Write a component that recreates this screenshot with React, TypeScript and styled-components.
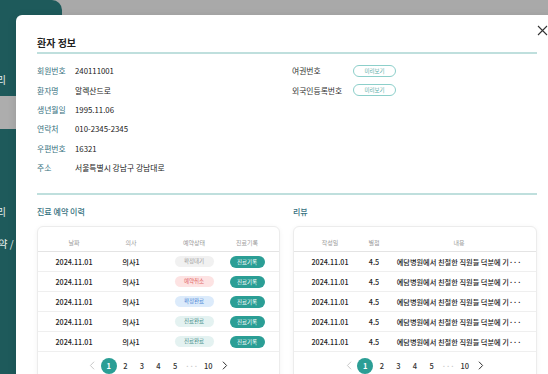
import React from 'react';
import styled, { createGlobalStyle } from 'styled-components';

type Status = 'wait' | 'cancel' | 'confirm' | 'done';

interface IReservation {
  date: string,
  doctor: string,
  status: Status,
}

interface IReview {
  date: string,
  rating: string,
  content: string,
}

const TEAL = '#2b9e95';

const GlobalStyle = createGlobalStyle`
  html, body {
    margin: 0;
    padding: 0;
  }
  body {
    width: 548px;
    height: 374px;
    overflow: hidden;
    background: #a9a9a9;
    font-family: "Noto Sans CJK KR", "Noto Sans", sans-serif;
  }
  * {
    box-sizing: border-box;
  }
`

const Page = styled.div`
  position: relative;
  display: flex;
  width: 548px;
  height: 374px;
  overflow: hidden;
  background: #a9a9a9;
`
const Sidebar = styled.nav`
  width: 62px;
  flex-shrink: 0;
  display: flex;
  flex-direction: column;
  padding-top: 63.6px;
  background: #1e5a5b;
  border-top-right-radius: 10px;
`
const MenuItem = styled.div<{ $active?: boolean; $shift?: number }>`
  height: 32.8px;
  display: flex;
  align-items: center;
  overflow: hidden;
  white-space: nowrap;
  font-size: 10px;
  color: #e6eeee;
  background: ${p => (p.$active ? '#adadad' : 'transparent')};
  span {
    margin-left: ${p => p.$shift || 0}px;
  }
`
const Content = styled.div`
  flex: 1;
  background: #a9a9a9;
`

const Modal = styled.div`
  position: absolute;
  left: 16px;
  top: 15px;
  width: 542px;
  height: 420px;
  padding: 21px 21px 0;
  background: #fff;
  border-radius: 6px;
  box-shadow: 0 2px 10px rgba(0, 0, 0, 0.12);
`
const Close = styled.button`
  position: absolute;
  top: 10px;
  right: 10px;
  width: 11px;
  height: 11px;
  padding: 0;
  border: none;
  background: none;
  display: flex;
`
const Title = styled.h2`
  margin: 0;
  height: 18px;
  line-height: 14px;
  font-size: 10px;
  font-weight: 700;
  color: #222;
  border-bottom: 2px solid #bfdfdd;
`
const Info = styled.div`
  display: flex;
  margin-top: 7px;
`
const InfoColumn = styled.div<{ $width?: string }>`
  width: ${p => p.$width || 'auto'};
  display: flex;
  flex-direction: column;
`
const InfoRow = styled.div`
  height: 19.4px;
  display: flex;
  align-items: center;
  font-size: 7.8px;
`
const Label = styled.div<{ $width: number; $dark?: boolean }>`
  width: ${p => p.$width}px;
  flex-shrink: 0;
  color: ${p => (p.$dark ? '#333' : '#35707e')};
`
const Value = styled.div`
  color: #222;
`
const PreviewButton = styled.button`
  width: 43px;
  height: 12px;
  padding: 0;
  border: 1px solid #8ccfca;
  border-radius: 6px;
  background: #fff;
  color: #5aaea8;
  font-family: inherit;
  font-size: 5.5px;
  line-height: 10px;
`
const Divider = styled.hr`
  margin: 16px 0 0;
  border: none;
  height: 2px;
  background: #bfdfdd;
`
const Tables = styled.div`
  display: grid;
  grid-template-columns: 243px 244px;
  column-gap: 13px;
  margin-top: 11px;
`
const Section = styled.section`
  display: flex;
  flex-direction: column;
`
const SectionTitle = styled.h3`
  margin: 0 0 8px;
  height: 12px;
  line-height: 12px;
  font-size: 8px;
  font-weight: 500;
  color: #35707e;
`
const Card = styled.div`
  padding-top: 6px;
  border: 1px solid #ececec;
  border-radius: 6px;
  background: #fff;
  box-shadow: 0 1px 5px rgba(0, 0, 0, 0.05);
`
const Row = styled.div<{ $cols: string; $head?: boolean }>`
  display: grid;
  grid-template-columns: ${p => p.$cols};
  height: ${p => (p.$head ? 19 : 20)}px;
  align-items: center;
  border-bottom: 1px solid ${p => (p.$head ? '#e4e4e4' : '#efefef')};
  font-size: ${p => (p.$head ? 6 : 7.2)}px;
  font-weight: ${p => (p.$head ? 400 : 500)};
  color: ${p => (p.$head ? '#9a9a9a' : '#222')};
`
const Cell = styled.div`
  display: flex;
  justify-content: center;
  white-space: nowrap;
`

const badgeColors: Record<Status, { bg: string; fg: string; text: string }> = {
  wait: { bg: '#f1f1f1', fg: '#9a9a9a', text: '확정대기' },
  cancel: { bg: '#fde3e3', fg: '#e26767', text: '예약취소' },
  confirm: { bg: '#dcebfb', fg: '#4a84d4', text: '확정완료' },
  done: { bg: '#e4f2f1', fg: '#3f8b88', text: '진료완료' },
};

const Badge = styled.span<{ $status: Status }>`
  width: 39px;
  height: 11px;
  line-height: 11px;
  text-align: center;
  border-radius: 6px;
  font-size: 5.5px;
  font-weight: 400;
  background: ${p => badgeColors[p.$status].bg};
  color: ${p => badgeColors[p.$status].fg};
`
const RecordButton = styled.button`
  width: 35px;
  height: 12px;
  flex-shrink: 0;
  padding: 0;
  border: none;
  border-radius: 6px;
  background: ${TEAL};
  color: #fff;
  font-family: inherit;
  font-size: 5.5px;
  line-height: 12px;
`
const Pagination = styled.div`
  display: flex;
  justify-content: center;
  align-items: center;
  height: 27px;
`
const PageItem = styled.span<{ $active?: boolean; $muted?: boolean }>`
  width: 16.6px;
  height: 16px;
  display: flex;
  align-items: center;
  justify-content: center;
  font-size: 7.5px;
  font-weight: ${p => (p.$active ? 700 : 500)};
  color: ${p => (p.$active ? '#fff' : p.$muted ? '#c8c8c8' : '#333')};
  span {
    width: 16px;
    height: 16px;
    border-radius: 50%;
    display: flex;
    align-items: center;
    justify-content: center;
    background: ${p => (p.$active ? TEAL : 'transparent')};
  }
`

const reservations: IReservation[] = [
  { date: '2024.11.01', doctor: '의사1', status: 'wait' },
  { date: '2024.11.01', doctor: '의사1', status: 'cancel' },
  { date: '2024.11.01', doctor: '의사1', status: 'confirm' },
  { date: '2024.11.01', doctor: '의사1', status: 'done' },
  { date: '2024.11.01', doctor: '의사1', status: 'done' },
];

const reviews: IReview[] = Array.from({ length: 5 }, () => ({
  date: '2024.11.01',
  rating: '4.5',
  content: '예담병원에서 친절한 직원들 덕분에 기···',
}));

const Chevron = ({ dir }: { dir: 'left' | 'right' }) => (
  <svg width="6" height="9" viewBox="0 0 6 9" fill="none">
    <path
      d={dir === 'left' ? 'M4.8 1 L1.4 4.5 L4.8 8' : 'M1.2 1 L4.6 4.5 L1.2 8'}
      stroke="currentColor"
      strokeWidth="1"
      strokeLinecap="round"
      strokeLinejoin="round"
    />
  </svg>
);

const Pager = () => (
  <Pagination>
    <PageItem $muted><Chevron dir="left" /></PageItem>
    <PageItem $active><span>1</span></PageItem>
    <PageItem>2</PageItem>
    <PageItem>3</PageItem>
    <PageItem>4</PageItem>
    <PageItem>5</PageItem>
    <PageItem $muted>···</PageItem>
    <PageItem>10</PageItem>
    <PageItem><Chevron dir="right" /></PageItem>
  </Pagination>
);

const RES_COLS = '72px 42px 84px 22px';
const REV_COLS = '72px 16px 1fr';

const App = () => {
  return (
    <Page>
      <GlobalStyle />
      {/* sidebar behind the dimmed overlay, mostly covered by the modal */}
      <Sidebar>
        <MenuItem $shift={-33}><span>회원 관리</span></MenuItem>
        <MenuItem $active />
        <MenuItem />
        <MenuItem />
        <MenuItem $shift={-33}><span>리뷰 관리</span></MenuItem>
        <MenuItem $shift={-11}><span>예약 / 진료</span></MenuItem>
      </Sidebar>
      <Content />
      <Modal>
        <Close aria-label="닫기">
          <svg width="11" height="11" viewBox="0 0 11 11">
            <path d="M1 1 L10 10 M10 1 L1 10" stroke="#333" strokeWidth="1.1" />
          </svg>
        </Close>
        <Title>환자 정보</Title>
        <Info>
          <InfoColumn $width="255px">
            <InfoRow><Label $width={38}>회원번호</Label><Value>240111001</Value></InfoRow>
            <InfoRow><Label $width={38}>환자명</Label><Value>알렉산드로</Value></InfoRow>
            <InfoRow><Label $width={38}>생년월일</Label><Value>1995.11.06</Value></InfoRow>
            <InfoRow><Label $width={38}>연락처</Label><Value>010-2345-2345</Value></InfoRow>
            <InfoRow><Label $width={38}>우편번호</Label><Value>16321</Value></InfoRow>
            <InfoRow><Label $width={38}>주소</Label><Value>서울특별시 강남구 강남대로</Value></InfoRow>
          </InfoColumn>
          <InfoColumn>
            <InfoRow><Label $width={61} $dark>여권번호</Label><PreviewButton>미리보기</PreviewButton></InfoRow>
            <InfoRow><Label $width={61} $dark>외국인등록번호</Label><PreviewButton>미리보기</PreviewButton></InfoRow>
          </InfoColumn>
        </Info>
        <Divider />
        <Tables>
          <Section>
            <SectionTitle>진료 예약 이력</SectionTitle>
            <Card>
              <Row $cols={RES_COLS} $head>
                <Cell>날짜</Cell>
                <Cell>의사</Cell>
                <Cell>예약상태</Cell>
                <Cell>진료기록</Cell>
              </Row>
              {reservations.map((r, i) => (
                <Row $cols={RES_COLS} key={i}>
                  <Cell>{r.date}</Cell>
                  <Cell>{r.doctor}</Cell>
                  <Cell><Badge $status={r.status}>{badgeColors[r.status].text}</Badge></Cell>
                  <Cell><RecordButton>진료기록</RecordButton></Cell>
                </Row>
              ))}
              <Pager />
            </Card>
          </Section>
          <Section>
            <SectionTitle>리뷰</SectionTitle>
            <Card>
              <Row $cols={REV_COLS} $head>
                <Cell>작성일</Cell>
                <Cell>별점</Cell>
                <Cell>내용</Cell>
              </Row>
              {reviews.map((r, i) => (
                <Row $cols={REV_COLS} key={i}>
                  <Cell>{r.date}</Cell>
                  <Cell>{r.rating}</Cell>
                  <Cell>{r.content}</Cell>
                </Row>
              ))}
              <Pager />
            </Card>
          </Section>
        </Tables>
      </Modal>
    </Page>
  );
};

export default App;
